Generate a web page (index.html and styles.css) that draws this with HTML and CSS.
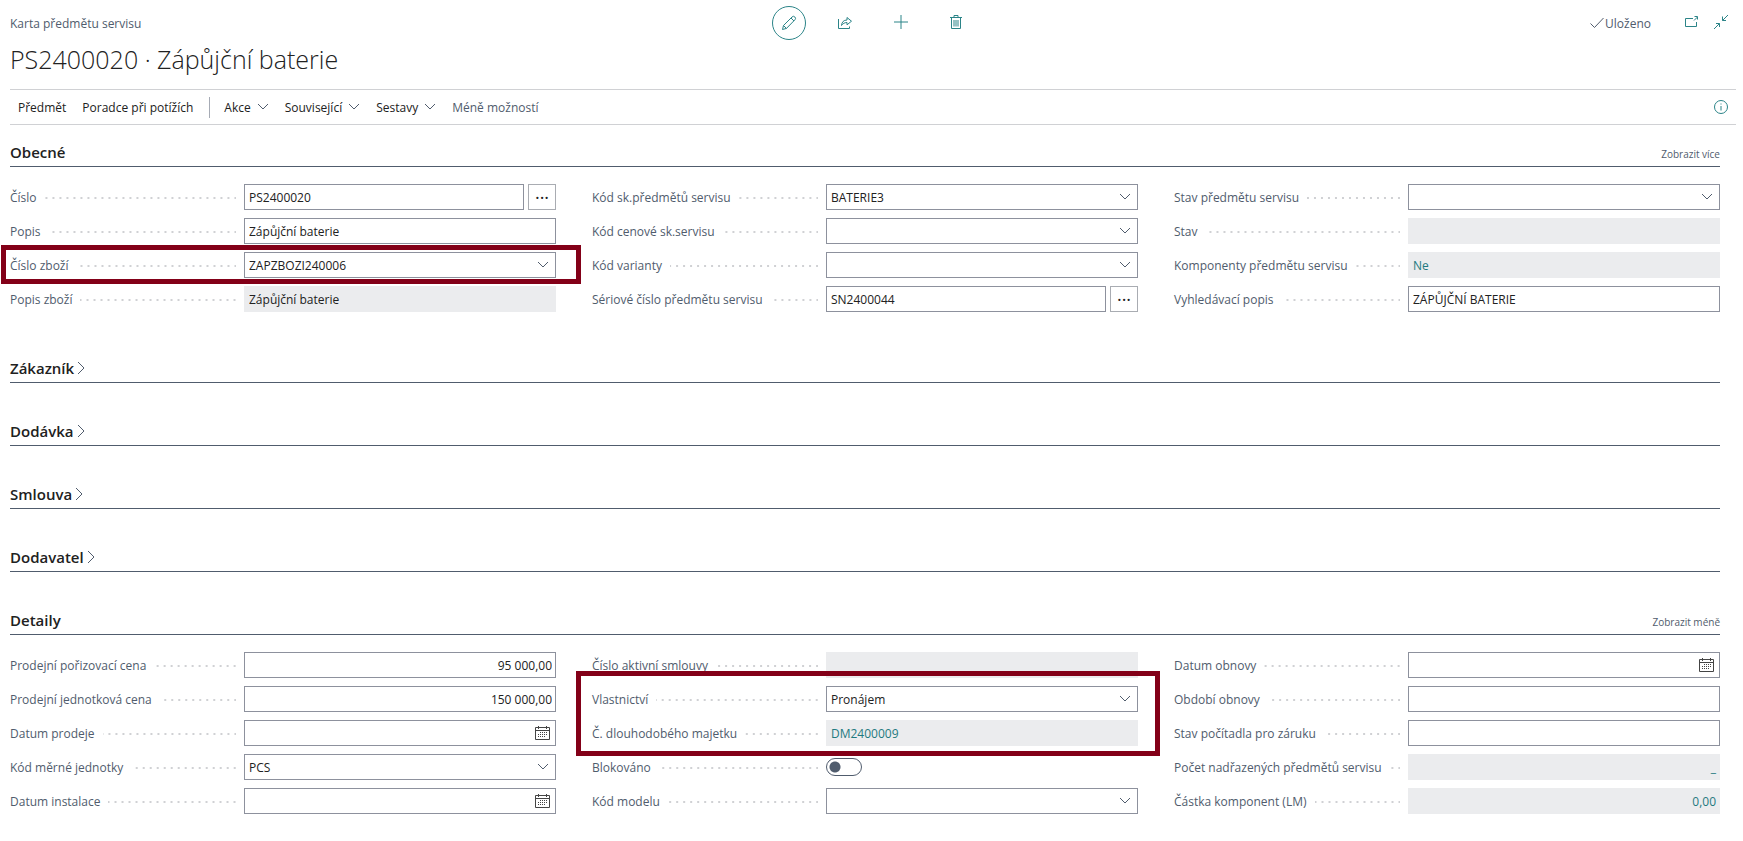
FILE: index.html
```html
<!DOCTYPE html>
<html lang="cs">
<head>
    <meta charset="UTF-8">
    <meta name="viewport" content="width=device-width, initial-scale=1.0">
    <title>PS2400020 · Zápůjční baterie</title>
    <link rel="stylesheet" href="styles.css">
</head>
<body>

    <header class="page-header">
        <div class="topbar">
            <div class="page-type">Karta předmětu servisu</div>
            <div class="tools">
                <button class="tool tool-active" type="button" aria-label="Upravit">
                    <svg width="16" height="16" viewBox="0 0 16 16"><path d="M1.500 14.500l1-4L11 2a1.800 1.800 0 0 1 2.900 2.800L5.500 13.400zM2.500 10.500l3 3M10 3l3 3"/></svg>
                </button>
                <button class="tool" type="button" aria-label="Sdílet">
                    <svg width="16" height="16" viewBox="0 0 16 16"><path d="M1.500 4v9.500h11v-2M4.500 10.500C4.800 7.200 6.500 5 10 5V2.500L14.500 6.200 10 9.800V7.500C7.500 7.500 6 8.500 4.500 10.500z"/></svg>
                </button>
                <button class="tool" type="button" aria-label="Nový">
                    <svg width="16" height="16" viewBox="0 0 16 16"><path d="M8 0v14M1 7h14"/></svg>
                </button>
                <button class="tool" type="button" aria-label="Odstranit">
                    <svg width="16" height="16" viewBox="0 0 16 16"><path d="M1 2.500h12M2.500 2.500v11h9v-11M5 2.500v-2h4v2M5 5v6.500M7 5v6.500M9 5v6.500"/></svg>
                </button>
            </div>
            <div class="status">
                <span class="saved">
                    <svg width="16" height="16" viewBox="0 0 16 16"><path d="M1.500 7.500l4 4L14.500 2"/></svg>
                    Uloženo
                </span>
                <button class="corner" type="button" aria-label="Otevřít v novém okně">
                    <svg width="16" height="16" viewBox="0 0 16 16"><path d="M10 3.500H2.500v8h11V7M11 5.500l3.500-3.500M11.500 1.500h3v3"/></svg>
                </button>
                <button class="corner" type="button" aria-label="Zmenšit">
                    <svg width="16" height="16" viewBox="0 0 16 16"><path d="M15 0L9.500 5.500M9.500 1.500v4H13M1 14l5.500-5.500M3 8.500h3.500V12"/></svg>
                </button>
            </div>
        </div>

        <h1>PS2400020 · Zápůjční baterie</h1>

        <nav class="actions">
            <button type="button">Předmět</button>
            <button type="button">Poradce při potížích</button>
            <span class="divider"></span>
            <button class="menu" type="button">Akce</button>
            <button class="menu" type="button">Související</button>
            <button class="menu" type="button">Sestavy</button>
            <button class="muted" type="button">Méně možností</button>
            <button class="info" type="button" aria-label="Informace">
                <svg width="16" height="16" viewBox="0 0 16 16"><circle cx="8" cy="8" r="6.500"/><path d="M8 7v4.500M8 4.500v1"/></svg>
            </button>
        </nav>
    </header>

    <main>
        <section>
            <div class="section-head">
                <h2>Obecné</h2>
                <a href="#">Zobrazit více</a>
            </div>
            <div class="columns">
                <div class="column">
                    <div class="field">
                        <label for="no">Číslo</label>
                        <div class="control">
                            <input id="no" type="text" value="PS2400020">
                            <button class="assist" type="button" aria-label="Vybrat číslo">···</button>
                        </div>
                    </div>
                    <div class="field">
                        <label for="desc">Popis</label>
                        <div class="control"><input id="desc" type="text" value="Zápůjční baterie"></div>
                    </div>
                    <div class="field marked">
                        <label for="item">Číslo zboží</label>
                        <div class="control"><select id="item"><option>ZAPZBOZI240006</option></select></div>
                        <span class="mark mark-item"></span>
                    </div>
                    <div class="field">
                        <label for="itemdesc">Popis zboží</label>
                        <div class="control"><input id="itemdesc" type="text" value="Zápůjční baterie" readonly></div>
                    </div>
                </div>
                <div class="column">
                    <div class="field">
                        <label for="group">Kód sk.předmětů servisu</label>
                        <div class="control"><select id="group"><option>BATERIE3</option></select></div>
                    </div>
                    <div class="field">
                        <label for="pricegroup">Kód cenové sk.servisu</label>
                        <div class="control"><select id="pricegroup"><option></option></select></div>
                    </div>
                    <div class="field">
                        <label for="variant">Kód varianty</label>
                        <div class="control"><select id="variant"><option></option></select></div>
                    </div>
                    <div class="field">
                        <label for="serial">Sériové číslo předmětu servisu</label>
                        <div class="control">
                            <input id="serial" type="text" value="SN2400044">
                            <button class="assist" type="button" aria-label="Vybrat sériové číslo">···</button>
                        </div>
                    </div>
                </div>
                <div class="column">
                    <div class="field">
                        <label for="itemstatus">Stav předmětu servisu</label>
                        <div class="control"><select id="itemstatus"><option></option></select></div>
                    </div>
                    <div class="field">
                        <label for="state">Stav</label>
                        <div class="control"><input id="state" type="text" readonly></div>
                    </div>
                    <div class="field">
                        <span class="label" id="components">Komponenty předmětu servisu</span>
                        <div class="control"><a class="value" href="#" aria-labelledby="components">Ne</a></div>
                    </div>
                    <div class="field">
                        <label for="search">Vyhledávací popis</label>
                        <div class="control"><input id="search" type="text" value="ZÁPŮJČNÍ BATERIE"></div>
                    </div>
                </div>
            </div>
        </section>

        <section class="collapsed">
            <div class="section-head"><h2><button type="button">Zákazník</button></h2></div>
        </section>
        <section class="collapsed">
            <div class="section-head"><h2><button type="button">Dodávka</button></h2></div>
        </section>
        <section class="collapsed">
            <div class="section-head"><h2><button type="button">Smlouva</button></h2></div>
        </section>
        <section class="collapsed">
            <div class="section-head"><h2><button type="button">Dodavatel</button></h2></div>
        </section>

        <section>
            <div class="section-head">
                <h2>Detaily</h2>
                <a href="#">Zobrazit méně</a>
            </div>
            <div class="columns">
                <div class="column">
                    <div class="field">
                        <label for="cost">Prodejní pořizovací cena</label>
                        <div class="control"><input class="number" id="cost" type="text" value="95 000,00"></div>
                    </div>
                    <div class="field">
                        <label for="price">Prodejní jednotková cena</label>
                        <div class="control"><input class="number" id="price" type="text" value="150 000,00"></div>
                    </div>
                    <div class="field">
                        <label for="saledate">Datum prodeje</label>
                        <div class="control"><input class="date" id="saledate" type="text"></div>
                    </div>
                    <div class="field">
                        <label for="unit">Kód měrné jednotky</label>
                        <div class="control"><select id="unit"><option>PCS</option></select></div>
                    </div>
                    <div class="field">
                        <label for="installdate">Datum instalace</label>
                        <div class="control"><input class="date" id="installdate" type="text"></div>
                    </div>
                </div>
                <div class="column">
                    <div class="field">
                        <label for="contract">Číslo aktivní smlouvy</label>
                        <div class="control"><input id="contract" type="text" readonly></div>
                    </div>
                    <div class="field marked">
                        <label for="ownership">Vlastnictví</label>
                        <div class="control"><select id="ownership"><option>Pronájem</option></select></div>
                        <span class="mark mark-ownership"></span>
                    </div>
                    <div class="field">
                        <span class="label" id="asset">Č. dlouhodobého majetku</span>
                        <div class="control"><a class="value" href="#" aria-labelledby="asset">DM2400009</a></div>
                    </div>
                    <div class="field">
                        <label for="blocked">Blokováno</label>
                        <div class="control"><input class="switch" id="blocked" type="checkbox"></div>
                    </div>
                    <div class="field">
                        <label for="model">Kód modelu</label>
                        <div class="control"><select id="model"><option></option></select></div>
                    </div>
                </div>
                <div class="column">
                    <div class="field">
                        <label for="renewdate">Datum obnovy</label>
                        <div class="control"><input class="date" id="renewdate" type="text"></div>
                    </div>
                    <div class="field">
                        <label for="renewperiod">Období obnovy</label>
                        <div class="control"><input id="renewperiod" type="text"></div>
                    </div>
                    <div class="field">
                        <label for="counter">Stav počítadla pro záruku</label>
                        <div class="control"><input id="counter" type="text"></div>
                    </div>
                    <div class="field">
                        <span class="label" id="parents">Počet nadřazených předmětů servisu</span>
                        <div class="control"><a class="value number" href="#" aria-labelledby="parents">_</a></div>
                    </div>
                    <div class="field">
                        <span class="label" id="amount">Částka komponent (LM)</span>
                        <div class="control"><a class="value number" href="#" aria-labelledby="amount">0,00</a></div>
                    </div>
                </div>
            </div>
        </section>
    </main>

</body>
</html>
```
FILE: styles.css
```css
/* General Styles */
* {
    box-sizing: border-box;
}

body {
    margin: 0;
    font-family: "Open Sans", "Noto Sans", sans-serif;
    font-size: 12px;
    line-height: 18px;
    background-color: #fff;
    color: #212121;
}

button, input, select {
    font: inherit;
    color: inherit;
    margin: 0;
}

button {
    padding: 0;
    border: none;
    background: none;
    cursor: pointer;
}

a {
    text-decoration: none;
}

svg {
    display: block;
    fill: none;
    stroke: currentColor;
}

/* Header */
.page-header {
    padding: 6px 7px 0 10px;
}

.topbar {
    display: grid;
    grid-template-columns: 1fr auto 1fr;
    align-items: center;
    color: #505c6d;
}

.page-type {
    padding-top: 2px;
}

.tools {
    display: flex;
    gap: 22px;
}

.tool {
    display: flex;
    align-items: center;
    justify-content: center;
    width: 34px;
    height: 34px;
    color: #2b8488;
}

.tool-active {
    border: 1px solid #2b8488;
    border-radius: 50%;
}

.status {
    display: flex;
    justify-content: flex-end;
    align-items: center;
    padding-right: 7px;
}

.saved {
    display: flex;
    align-items: center;
    margin-right: 32px;
    padding-top: 2px;
}

.corner {
    color: #2b8488;
}

.corner + .corner {
    margin-left: 14px;
}

h1 {
    margin: 0;
    padding: 1px 0 11px;
    font-size: 25px;
    font-weight: 300;
    line-height: 37px;
}

/* Action bar */
.actions {
    display: flex;
    align-items: center;
    gap: 16px;
    height: 36px;
    padding: 0 7px 0 8px;
    border-top: 1px solid #d0d1d4;
    border-bottom: 1px solid #d0d1d4;
}

.actions button {
    padding-top: 2px;
}

.actions .divider {
    width: 1px;
    height: 21px;
    margin-right: -2px;
    background-color: #a6abb5;
}

.actions .menu {
    padding-right: 18px;
    background: url("data:image/svg+xml,%3Csvg xmlns='http://www.w3.org/2000/svg' width='12' height='8' fill='none' stroke='%23505c6d'%3E%3Cpath d='M1 1l5 5 5-5'/%3E%3C/svg%3E") no-repeat right center;
}

.muted {
    color: #505c6d;
}

.actions .info {
    margin-left: auto;
    padding: 0;
    color: #2b8488;
}

/* Sections */
main {
    padding: 16px 23px 0 10px;
}

.section-head {
    display: flex;
    justify-content: space-between;
    align-items: center;
    height: 26px;
    padding-bottom: 4px;
    border-bottom: 1px solid #505c6d;
}

.section-head a {
    padding-top: 4px;
    font-size: 10px;
    color: #505c6d;
}

h2 {
    margin: 0;
    font-size: 15px;
    font-weight: 600;
    line-height: 20px;
}

h2 button {
    padding-right: 12px;
    background: url("data:image/svg+xml,%3Csvg xmlns='http://www.w3.org/2000/svg' width='9' height='14' fill='none' stroke='%23505c6d'%3E%3Cpath d='M1 1l6 6-6 6'/%3E%3C/svg%3E") no-repeat right center;
}

.collapsed {
    margin-bottom: 37px;
}

.columns {
    display: grid;
    grid-template-columns: repeat(3, 1fr);
    gap: 36px;
    padding: 17px 0 45px;
}

.column {
    display: flex;
    flex-direction: column;
    gap: 8px;
}

/* Fields */
.field {
    display: grid;
    grid-template-columns: 3fr 4fr;
    height: 26px;
}

label, .label {
    display: flex;
    align-items: center;
    padding: 2px 8px 0 0;
    color: #505c6d;
    white-space: nowrap;
}

/* dotted leader between label and control */
label::after, .label::after {
    content: "";
    flex: 1;
    height: 2px;
    margin-left: 8px;
    background: linear-gradient(to left, #d0d1d4 2px, transparent 2px) right center / 7px 2px repeat-x;
}

.control {
    display: flex;
    gap: 4px;
    min-width: 0;
}

.control input, .control select, .value {
    flex: 1;
    min-width: 0;
    padding: 2px 4px 0;
    border: 1px solid #8d919d;
    border-radius: 0;
    background-color: #fff;
}

.control select {
    appearance: none;
    background-image: url("data:image/svg+xml,%3Csvg xmlns='http://www.w3.org/2000/svg' width='12' height='8' fill='none' stroke='%23505c6d'%3E%3Cpath d='M1 1l5 5 5-5'/%3E%3C/svg%3E");
    background-repeat: no-repeat;
    background-position: right 6px center;
}

.control input[readonly], .control .value {
    border-color: #ebecee;
    background-color: #ebecee;
}

.value {
    line-height: 22px;
    color: #1f7a80;
}

.control .number {
    padding-right: 3px;
    text-align: right;
}

.control .date {
    background-image: url("data:image/svg+xml,%3Csvg xmlns='http://www.w3.org/2000/svg' width='15' height='14' fill='none' stroke='%23444'%3E%3Cpath d='M.5 1.500h14v12H.5zM.5 4.500h14M3.500 0v3M11.500 0v3'/%3E%3Cpath d='M5 6.500h8M3 8.500h10M3 10.500h8' stroke-dasharray='1 1'/%3E%3C/svg%3E");
    background-repeat: no-repeat;
    background-position: right 5px center;
}

.assist {
    width: 28px;
    border: 1px solid #a9acb2;
    font-size: 18px;
}

.control .switch {
    appearance: none;
    flex: none;
    align-self: center;
    width: 36px;
    height: 18px;
    padding: 0;
    border: 1px solid #505c6d;
    border-radius: 9px;
    background: radial-gradient(circle at 8px 8px, #505c6d 5px, transparent 6px);
}

/* Red frames drawn over the highlighted fields */
.marked {
    position: relative;
}

.mark {
    position: absolute;
    border: 5px solid #830018;
    pointer-events: none;
}

.mark-item {
    inset: -7px -25px -6px -9px;
}

.mark-ownership {
    inset: -15px -22px -44px -16px;
}
```
